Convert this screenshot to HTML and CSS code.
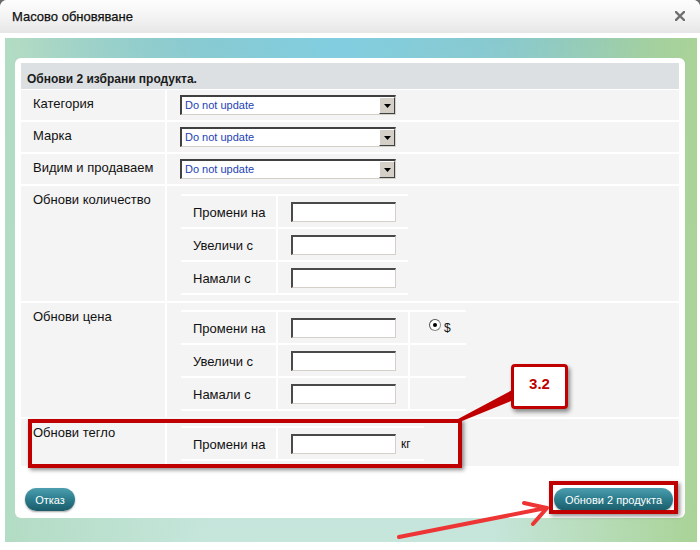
FILE: index.html
```html
<!DOCTYPE html>
<html lang="bg">
<head>
<meta charset="utf-8">
<title>Масово обновяване</title>
<link rel="stylesheet" href="styles.css">
</head>
<body>
<div class="dialog">
  <div class="titlebar">
    <span class="title">Масово обновяване</span>
    <svg class="close" width="10" height="10" viewBox="0 0 10 10"><path d="M1 1L9 9M9 1L1 9" stroke="#6f6f6f" stroke-width="2.4" stroke-linecap="square"/></svg>
  </div>
  <div class="backdrop">
    <div class="card">
      <div class="form">
        <div class="head"><span class="head-text">Обнови 2 избрани продукта.</span></div>

        <div class="lbl">Категория</div>
        <div class="val"><div class="select"><span class="sel-text">Do not update</span><span class="sel-btn"><svg width="7" height="4" viewBox="0 0 7 4"><path d="M0 0H7L3.5 4Z" fill="#000"/></svg></span></div></div>

        <div class="lbl">Марка</div>
        <div class="val"><div class="select"><span class="sel-text">Do not update</span><span class="sel-btn"><svg width="7" height="4" viewBox="0 0 7 4"><path d="M0 0H7L3.5 4Z" fill="#000"/></svg></span></div></div>

        <div class="lbl">Видим и продаваем</div>
        <div class="val"><div class="select"><span class="sel-text">Do not update</span><span class="sel-btn"><svg width="7" height="4" viewBox="0 0 7 4"><path d="M0 0H7L3.5 4Z" fill="#000"/></svg></span></div></div>

        <div class="lbl">Обнови количество</div>
        <div class="val nest qty">
          <div class="sub two">
            <div class="sl">Промени на</div><div class="si"><span class="inp"></span></div>
            <div class="sl">Увеличи с</div><div class="si"><span class="inp"></span></div>
            <div class="sl">Намали с</div><div class="si"><span class="inp"></span></div>
          </div>
        </div>

        <div class="lbl">Обнови цена</div>
        <div class="val nest price">
          <div class="sub three">
            <div class="sl">Промени на</div><div class="si"><span class="inp"></span></div><div class="sr"><span class="radio"><span class="dot"></span></span><span class="cur">$</span></div>
            <div class="sl">Увеличи с</div><div class="si"><span class="inp"></span></div><div class="sr"></div>
            <div class="sl">Намали с</div><div class="si"><span class="inp"></span></div><div class="sr"></div>
          </div>
        </div>

        <div class="lbl">Обнови тегло</div>
        <div class="val nest weight">
          <div class="sub wt">
            <div class="sl">Промени на</div><div class="si"><span class="inp"></span><span class="unit">кг</span></div>
          </div>
        </div>
      </div>
      <div class="actions">
        <button class="btn cancel">Отказ</button>
        <button class="btn submit">Обнови 2 продукта</button>
      </div>
    </div>
  </div>

  <div class="ann-box weight-box"></div>
  <div class="ann-box btn-box"></div>
  <svg class="ann-svg" width="700" height="550" viewBox="0 0 700 550">
    <polygon points="514,389 516,399 462,421 458,419" fill="#c00000"/>
    <line x1="399" y1="537" x2="546" y2="508" stroke="#ee3535" stroke-width="4" stroke-linecap="round"/>
    <polyline points="524,503 547,508 533,524" fill="none" stroke="#ee3535" stroke-width="4" stroke-linecap="round" stroke-linejoin="round"/>
  </svg>
  <div class="callout">3.2</div>
</div>
</body>
</html>
```

FILE: styles.css
```css
* { box-sizing: border-box; }
html, body { margin: 0; padding: 0; }
body {
  background: #6a6a6a;
  width: 700px;
  height: 550px;
  overflow: hidden;
  font-family: "Liberation Sans", Arial, sans-serif;
}
.dialog {
  position: relative;
  width: 700px;
  height: 550px;
  background: #fff;
  border-radius: 7px 7px 0 0;
  overflow: hidden;
}
.titlebar {
  height: 33px;
  background: linear-gradient(180deg, #fdfdfd 0%, #f4f4f4 50%, #e6e6e6 100%);
  display: flex;
  align-items: center;
  justify-content: space-between;
  padding: 0 15px 0 12px;
}
.title {
  font-size: 13px;
  color: #111;
  -webkit-text-stroke: 0.25px #111;
}
.close { display: block; margin-top: -1px; }
.backdrop {
  margin: 5px 3px 0 5px;
  height: 504px;
  padding: 20px 12px 0 10px;
  background:
    radial-gradient(ellipse 45% 70% at 48% 0%, rgba(128, 206, 226, 0.95), rgba(128, 206, 226, 0) 100%),
    linear-gradient(90deg, #b3dcc4 0%, rgba(179, 220, 196, 0) 30%, rgba(166, 207, 150, 0) 70%, #a9d397 100%),
    linear-gradient(180deg, #8fc4be 0%, #b8ded2 40%, #c6e6dc 100%);
}
.card {
  background: #fff;
  border-radius: 6px;
  padding: 5px 6px 8px 6px;
  height: 460px;
}
.form {
  display: grid;
  grid-template-columns: 144px 1fr;
  grid-template-rows: 25px 30px 30px 30px 115px 114px 47px;
  gap: 2px;
  background: #fff;
}
.head {
  grid-column: 1 / 3;
  background: #dce0e3;
  padding: 6px 6px 0 6px;
  margin-bottom: -1px;
}
.head-text {
  font-weight: bold;
  font-size: 12px;
  color: #1a1a1a;
}
.lbl {
  background: #f4f4f4;
  font-size: 13px;
  line-height: 16px;
  color: #111;
  padding: 6px 0 6px 12px;
  white-space: nowrap;
}
.val {
  background: #f4f4f4;
  display: flex;
  align-items: center;
  padding-left: 13px;
}
.select {
  width: 216px;
  height: 20px;
  background: #fff;
  border-top: 2px solid #404040;
  border-left: 2px solid #404040;
  border-right: 1px solid #d4d0c8;
  border-bottom: 1px solid #d4d0c8;
  display: flex;
  align-items: stretch;
}
.sel-text {
  flex: 1;
  font-size: 11px;
  color: #1e3fb4;
  line-height: 17px;
  padding-left: 3px;
}
.sel-btn {
  width: 16px;
  background: #d4d0c8;
  border-top: 1px solid #fff;
  border-left: 1px solid #fff;
  border-right: 1px solid #404040;
  border-bottom: 1px solid #404040;
  display: flex;
  align-items: center;
  justify-content: center;
}
.nest {
  align-items: flex-start;
  padding-left: 14px;
}
.qty { padding-top: 8px; }
.price { padding-top: 7px; }
.weight { padding-top: 7px; }
.sub {
  display: grid;
  gap: 2px;
  padding: 2px 0;
  background: #fff;
  grid-auto-rows: 31px;
}
.two { grid-template-columns: 95px 130px; }
.three { grid-template-columns: 95px 130px 56px; }
.wt { grid-template-columns: 95px 146px; }
.sl, .si, .sr {
  background: #f4f4f4;
  display: flex;
  align-items: center;
}
.sl {
  font-size: 13px;
  color: #111;
  padding-left: 12px;
  padding-top: 1px;
}
.si { padding-left: 13px; }
.inp {
  display: block;
  width: 105px;
  height: 20px;
  background: #fff;
  border-top: 2px solid #4a4a4a;
  border-left: 2px solid #4a4a4a;
  border-right: 1px solid #d4d0c8;
  border-bottom: 1px solid #d4d0c8;
}
.unit {
  font-size: 12px;
  color: #111;
  margin-left: 5px;
}
.sr { padding-left: 19px; }
.radio {
  width: 12px;
  height: 12px;
  border-radius: 50%;
  background: #fff;
  border: 1px solid #8a8a8a;
  border-top-color: #555;
  border-left-color: #555;
  display: flex;
  align-items: center;
  justify-content: center;
  margin-top: -6px;
}
.dot {
  width: 4px;
  height: 4px;
  border-radius: 50%;
  background: #000;
}
.cur {
  font-size: 12px;
  color: #111;
  margin-left: 3px;
}
.actions {
  display: flex;
  justify-content: space-between;
  padding: 22px 6px 0 4px;
}
.btn {
  height: 23px;
  border: none;
  border-radius: 12px;
  background: linear-gradient(180deg, #4d9eae 0%, #2e7f8f 45%, #1b5c6a 100%);
  color: #fff;
  font-family: "Liberation Sans", Arial, sans-serif;
  font-size: 11px;
  padding: 0;
  box-shadow: 0 1px 2px rgba(0, 0, 0, 0.35);
}
.cancel { width: 50px; }
.submit { width: 119px; }
.ann-box {
  position: absolute;
  border: 4px solid #c00000;
  box-shadow: 2px 2px 4px rgba(0, 0, 0, 0.45);
}
.weight-box { left: 28px; top: 419px; width: 434px; height: 49px; }
.btn-box { left: 549px; top: 481px; width: 129px; height: 33px; }
.ann-svg { position: absolute; left: 0; top: 0; }
.callout {
  position: absolute;
  left: 511px;
  top: 364px;
  width: 57px;
  height: 45px;
  background: #fff;
  border: 3px solid #c00000;
  border-radius: 4px;
  box-shadow: 2px 3px 4px rgba(0, 0, 0, 0.45);
  color: #c00000;
  font-family: "Liberation Sans", Arial, sans-serif;
  font-weight: bold;
  font-size: 15px;
  text-align: center;
  padding-top: 8px;
}
```
